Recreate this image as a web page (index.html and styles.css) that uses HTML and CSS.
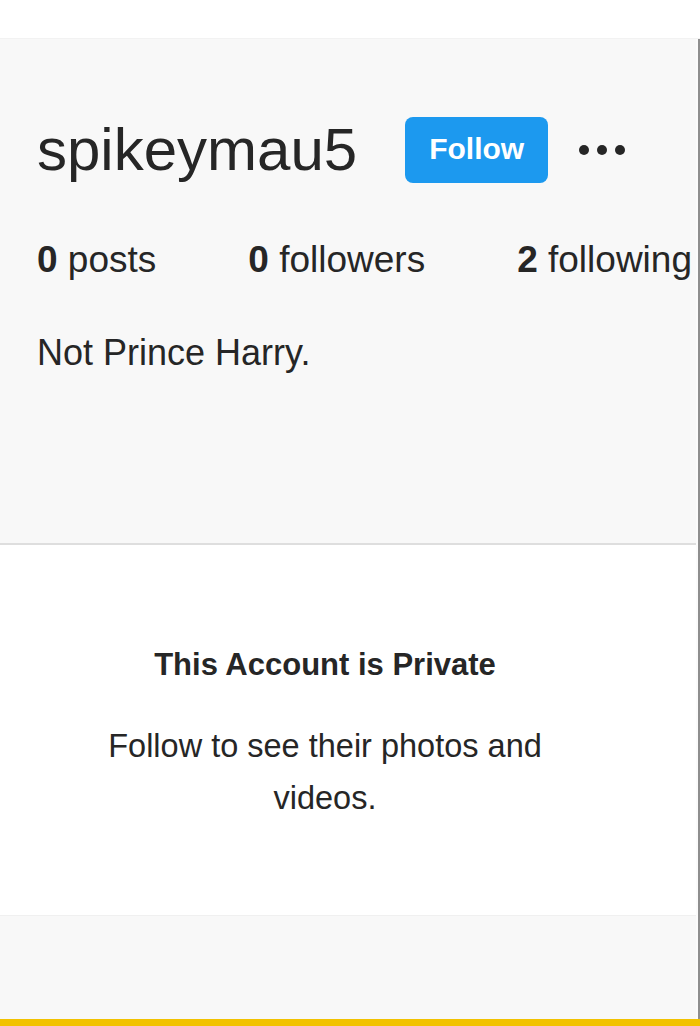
FILE: index.html
```html
<!DOCTYPE html>
<html lang="en">
<head>
<meta charset="utf-8">
<title>spikeymau5</title>
<link rel="stylesheet" href="styles.css">
</head>
<body>
<div class="topbar"></div>
<div class="frame">
  <main class="content">
    <header class="profile">
      <div class="title-row">
        <h1 class="username">spikeymau5</h1>
        <button class="follow-btn">Follow</button>
        <div class="more" aria-label="More options"><span></span><span></span><span></span></div>
      </div>
      <ul class="stats">
        <li><b>0</b> posts</li>
        <li><b>0</b> followers</li>
        <li><b>2</b> following</li>
      </ul>
      <p class="bio">Not Prince Harry.</p>
    </header>
    <section class="private">
      <div class="private-inner">
        <h2 class="private-title">This Account is Private</h2>
        <p class="private-text">Follow to see their photos and videos.</p>
      </div>
    </section>
    <div class="footer-band"></div>
  </main>
  <div class="edge"></div>
</div>
<div class="bottom-line"></div>
</body>
</html>
```

FILE: styles.css
```css
html, body {
  margin: 0;
  padding: 0;
}
body {
  width: 700px;
  height: 1026px;
  overflow: hidden;
  background: #ffffff;
  font-family: "Liberation Sans", Arial, sans-serif;
  color: #262626;
}
.topbar {
  height: 38px;
  background: #ffffff;
  border-bottom: 1px solid #f2f2f2;
}
.frame {
  display: flex;
  height: 980px;
}
.content {
  flex: 1;
  display: flex;
  flex-direction: column;
}
.edge {
  width: 2px;
  background: #fbfbfb;
  border-right: 2px solid #8e8e8e;
}
.profile {
  box-sizing: border-box;
  height: 506px;
  padding: 78px 0 0 37px;
  background: #f8f8f8;
  border-bottom: 2px solid #dedede;
}
.title-row {
  display: flex;
  align-items: center;
  height: 66px;
}
.username {
  margin: 0 48px 0 0;
  font-size: 60px;
  font-weight: 400;
  line-height: 66px;
  color: #262626;
}
.follow-btn {
  width: 143px;
  height: 66px;
  border: 0;
  border-radius: 8px;
  background: #1c99ef;
  color: #ffffff;
  font-family: "Liberation Sans", Arial, sans-serif;
  font-size: 30px;
  font-weight: 700;
  padding: 0 0 2px 0;
}
.more {
  display: flex;
  gap: 8px;
  margin-left: 31px;
}
.more span {
  width: 10px;
  height: 10px;
  border-radius: 50%;
  background: #262626;
}
.stats {
  display: flex;
  gap: 92px;
  list-style: none;
  margin: 56px 0 0;
  padding: 0;
  font-size: 37px;
  line-height: 42px;
  white-space: nowrap;
}
.stats b {
  font-weight: 700;
}
.bio {
  margin: 51px 0 0;
  font-size: 36px;
  line-height: 41px;
}
.private {
  box-sizing: border-box;
  height: 370px;
  background: #ffffff;
  padding-top: 102px;
}
.private-inner {
  width: 650px;
  text-align: center;
}
.private-title {
  margin: 0;
  font-size: 31px;
  font-weight: 700;
  line-height: 36px;
}
.private-text {
  margin: 37px auto 0;
  max-width: 470px;
  font-size: 32.5px;
  line-height: 52px;
}
.footer-band {
  flex: 1;
  background: #f8f8f8;
  border-top: 1px solid #f0f0f0;
}
.bottom-line {
  height: 7px;
  background: #f2c200;
}
```
